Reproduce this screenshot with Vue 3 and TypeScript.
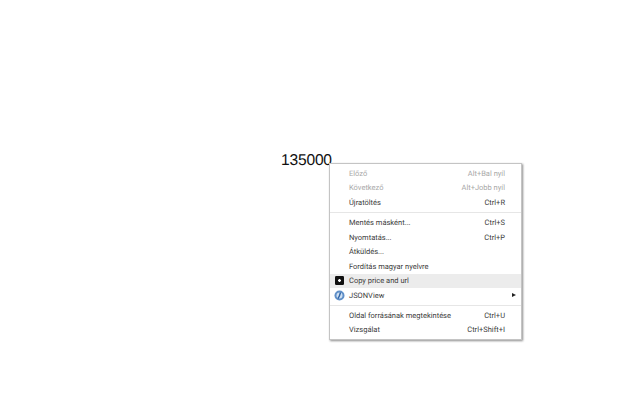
<script setup lang="ts">
interface Item { label?: string; shortcut?: string; disabled?: boolean; hover?: boolean; icon?: string; arrow?: boolean; sep?: boolean }
const items: Item[] = [
  { label: 'Előző', shortcut: 'Alt+Bal nyíl', disabled: true },
  { label: 'Következő', shortcut: 'Alt+Jobb nyíl', disabled: true },
  { label: 'Újratöltés', shortcut: 'Ctrl+R' },
  { sep: true },
  { label: 'Mentés másként...', shortcut: 'Ctrl+S' },
  { label: 'Nyomtatás...', shortcut: 'Ctrl+P' },
  { label: 'Átküldés...' },
  { label: 'Fordítás magyar nyelvre' },
  { label: 'Copy price and url', hover: true, icon: 'copy' },
  { label: 'JSONView', icon: 'json', arrow: true },
  { sep: true },
  { label: 'Oldal forrásának megtekintése', shortcut: 'Ctrl+U' },
  { label: 'Vizsgálat', shortcut: 'Ctrl+Shift+I' },
]
</script>

<template>
  <div class="page">
    <div class="price">135000</div>
    <div class="menu">
      <template v-for="(it, i) in items" :key="i">
        <div v-if="it.sep" class="sep"></div>
        <div v-else class="row" :class="{ disabled: it.disabled, hover: it.hover }">
          <span class="icon">
            <svg v-if="it.icon === 'copy'" width="9" height="9" viewBox="0 0 9 9">
              <rect width="9" height="9" rx="1.2" fill="#111" />
              <path d="M3 4.5h3M4.5 3v3" stroke="#fff" stroke-width="1.3" />
            </svg>
            <svg v-if="it.icon === 'json'" width="11" height="11" viewBox="0 0 11 11">
              <circle cx="5.5" cy="5.5" r="5" fill="#5f8fc8" />
              <circle cx="5.5" cy="5.5" r="3" fill="#cfe0f2" />
              <path d="M6.5 2.5C6 4.5 5.5 6.5 4 8.5" stroke="#2f63a5" stroke-width="1.4" fill="none" />
            </svg>
          </span>
          <span class="label">{{ it.label }}</span>
          <span v-if="it.shortcut" class="shortcut">{{ it.shortcut }}</span>
          <span v-if="it.arrow" class="arrow"></span>
        </div>
      </template>
    </div>
  </div>
</template>

<style>
html, body { margin: 0; background: #fff; }
</style>

<style scoped>
.page {
  position: relative;
  width: 640px;
  height: 400px;
  background: #fff;
  overflow: hidden;
  font-family: Roboto, sans-serif;
  text-rendering: geometricPrecision;
}
.price {
  position: absolute;
  left: 281px;
  top: 152px;
  font: 15.6px/18px "Liberation Sans", sans-serif;
  letter-spacing: -0.2px;
  color: #111;
}
.menu {
  position: absolute;
  left: 329px;
  top: 163px;
  width: 193px;
  box-sizing: border-box;
  padding: 2px 0;
  background: #fff;
  border: 1px solid #c4c4c4;
  box-shadow: 1px 1px 2px rgba(0, 0, 0, 0.45);
}
.row {
  display: flex;
  align-items: center;
  height: 14.6px;
  padding: 0 8px 0 3px;
  font-size: 7.5px;
  color: #3c3c3c;
}
.row.disabled { color: #a8a8a8; }
.row.hover { background: #ececec; }
.icon {
  display: flex;
  align-items: center;
  justify-content: center;
  width: 13px;
  height: 11px;
  margin-right: 3px;
}
.label { flex: 1; white-space: nowrap; }
.shortcut { margin-right: 8px; color: inherit; white-space: nowrap; }
.arrow {
  width: 0;
  height: 0;
  border-left: 4px solid #222;
  border-top: 2.5px solid transparent;
  border-bottom: 2.5px solid transparent;
  margin-right: 2px;
}
.row:has(.arrow) { padding-right: 3px; }
.sep {
  height: 1px;
  background: #e6e6e6;
  margin: 2.2px 0;
}
</style>
